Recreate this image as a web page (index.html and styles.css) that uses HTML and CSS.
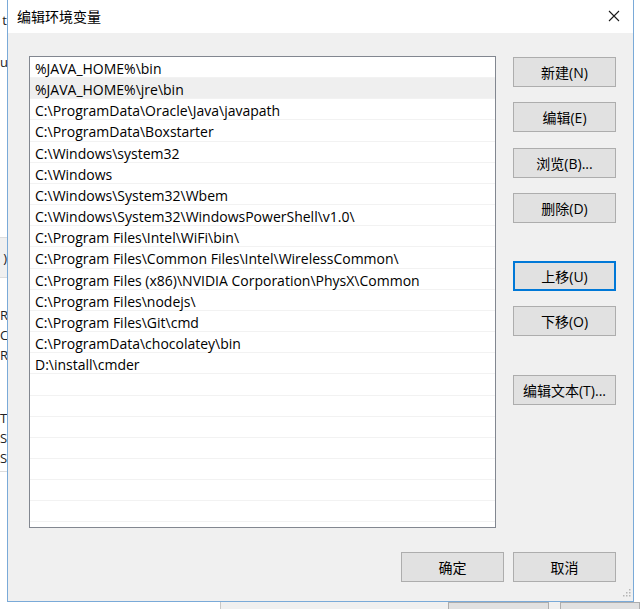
FILE: index.html
```html
<!DOCTYPE html>
<html lang="zh-CN">
<head>
    <meta charset="UTF-8">
    <title>编辑环境变量</title>
    <link rel="stylesheet" href="styles.css">
</head>
<body>
    <!-- Window behind the dialog: only its left and bottom edges show -->
    <div class="behind">
        <div class="behind-top">
            <div class="behind-side">
                <div class="frag frag-a">t</div>
                <div class="frag frag-b">u</div>
                <div class="frag frag-line"></div>
                <div class="frag frag-band">)</div>
                <div class="frag frag-gap-1"></div>
                <div class="frag frag-d">R</div>
                <div class="frag frag-d">C</div>
                <div class="frag frag-d">R</div>
                <div class="frag frag-gap-2"></div>
                <div class="frag frag-d">T</div>
                <div class="frag frag-d">S</div>
                <div class="frag frag-f">S</div>
            </div>
        </div>
        <div class="behind-bottom">
            <div class="bb-white"></div>
            <div class="bb-grey">
                <div class="bb-btn bb-btn-1"></div>
                <div class="bb-btn bb-btn-2"></div>
            </div>
        </div>
    </div>

    <!-- Edit environment variable dialog -->
    <div class="dialog">
        <div class="titlebar">
            <span class="title">编辑环境变量</span>
            <span class="close">
                <svg width="12" height="12" viewBox="0 0 12 12">
                    <path d="M1 1L11 11M11 1L1 11" stroke="#1a1a1a" stroke-width="1.1" fill="none"/>
                </svg>
            </span>
        </div>

        <div class="dialog-body">
            <div class="main-row">
                <!-- PATH entries -->
                <ul class="path-list">
                    <li>%JAVA_HOME%\bin</li>
                    <li class="hover">%JAVA_HOME%\jre\bin</li>
                    <li>C:\ProgramData\Oracle\Java\javapath</li>
                    <li>C:\ProgramData\Boxstarter</li>
                    <li>C:\Windows\system32</li>
                    <li>C:\Windows</li>
                    <li>C:\Windows\System32\Wbem</li>
                    <li>C:\Windows\System32\WindowsPowerShell\v1.0\</li>
                    <li>C:\Program Files\Intel\WiFi\bin\</li>
                    <li>C:\Program Files\Common Files\Intel\WirelessCommon\</li>
                    <li>C:\Program Files (x86)\NVIDIA Corporation\PhysX\Common</li>
                    <li>C:\Program Files\nodejs\</li>
                    <li>C:\Program Files\Git\cmd</li>
                    <li>C:\ProgramData\chocolatey\bin</li>
                    <li>D:\install\cmder</li>
                    <li></li>
                    <li></li>
                    <li></li>
                    <li></li>
                    <li></li>
                    <li></li>
                    <li></li>
                    <li></li>
                </ul>

                <!-- Action buttons -->
                <div class="actions">
                    <button class="btn">新建(N)</button>
                    <button class="btn">编辑(E)</button>
                    <button class="btn">浏览(B)...</button>
                    <button class="btn">删除(D)</button>
                    <button class="btn btn-focus group-start">上移(U)</button>
                    <button class="btn">下移(O)</button>
                    <button class="btn group-start">编辑文本(T)...</button>
                </div>
            </div>

            <div class="footer">
                <button class="btn">确定</button>
                <button class="btn">取消</button>
            </div>
        </div>

        <!-- Resize grip -->
        <svg class="grip" width="10" height="10" viewBox="0 0 10 10">
            <rect x="8" y="0" width="1.5" height="1.5" fill="#b5b5b5"/>
            <rect x="5" y="3" width="1.5" height="1.5" fill="#b5b5b5"/>
            <rect x="8" y="3" width="1.5" height="1.5" fill="#b5b5b5"/>
            <rect x="2" y="6" width="1.5" height="1.5" fill="#b5b5b5"/>
            <rect x="5" y="6" width="1.5" height="1.5" fill="#b5b5b5"/>
            <rect x="8" y="6" width="1.5" height="1.5" fill="#b5b5b5"/>
        </svg>
    </div>
</body>
</html>
```

FILE: styles.css
```css
/* Reset */
* {
    margin: 0;
    padding: 0;
    box-sizing: border-box;
}

body {
    width: 640px;
    height: 609px;
    overflow: hidden;
    position: relative;
    font-family: "Open Sans", "Noto Sans CJK SC", sans-serif;
    color: #000;
    background: #fff;
}

/* Window behind the dialog */
.behind {
    height: 100%;
    display: flex;
    flex-direction: column;
}

.behind-top {
    flex: 1;
}

.behind-side {
    width: 7px;
    overflow: hidden;
    font-size: 13px;
    color: #222;
}

.frag {
    text-align: right;
    white-space: nowrap;
    overflow: hidden;
}

.frag-a { height: 40px; line-height: 40px; }
.frag-b { height: 44px; line-height: 44px; }
.frag-line { height: 154px; border-bottom: 1px solid #dcdcdc; }
.frag-band { height: 40px; line-height: 40px; background: #f0f0f0; border-bottom: 1px solid #dcdcdc; }
.frag-gap-1 { height: 27px; }
.frag-gap-2 { height: 43px; }
.frag-d { height: 20px; line-height: 20px; }
.frag-f { height: 24px; line-height: 20px; border-bottom: 1px solid #dcdcdc; }

.behind-bottom {
    height: 7px;
    display: flex;
}

.bb-white {
    width: 220px;
    background: #fff;
}

.bb-grey {
    flex: 1;
    background: #f0f0f0;
    border-left: 1px solid #c8c8c8;
    display: flex;
    padding-left: 227px;
    gap: 11px;
}

.bb-btn {
    background: #e1e1e1;
    border: 1px solid #adadad;
    border-bottom: none;
}

.bb-btn-1 { width: 101px; }
.bb-btn-2 { flex: 1; }

/* Dialog frame */
.dialog {
    position: absolute;
    left: 7px;
    top: 0;
    width: 627px;
    height: 602px;
    border: 1px solid #7aaad8;
    border-top: none;
    background: #f0f0f0;
    display: flex;
    flex-direction: column;
}

.titlebar {
    height: 33px;
    background: #fff;
    display: flex;
    align-items: center;
    justify-content: space-between;
    padding-left: 9px;
    padding-bottom: 2px;
}

.title {
    font-size: 14px;
}

.close {
    width: 38px;
    height: 31px;
    display: flex;
    align-items: center;
    justify-content: center;
}

.dialog-body {
    flex: 1;
    padding: 23px 17px 19px 21px;
    display: flex;
    flex-direction: column;
}

.main-row {
    display: flex;
    gap: 17px;
}

/* PATH list */
.path-list {
    flex: 1;
    height: 472px;
    border: 1px solid #828790;
    background: #fff;
    overflow: hidden;
    list-style: none;
}

.path-list li {
    height: 21.17px;
    padding-top: 2px;
    line-height: 20px;
    padding-left: 5px;
    border-bottom: 1px solid #f2f2f2;
    font-size: 14px;
    white-space: nowrap;
}

.path-list li.hover {
    background: #efefef;
}

/* Buttons */
.actions {
    width: 103px;
    display: flex;
    flex-direction: column;
    gap: 15.3px;
    padding-top: 1px;
}

.group-start {
    margin-top: 23px;
}

.btn {
    width: 103px;
    height: 30px;
    background: #e1e1e1;
    border: 1px solid #adadad;
    font-family: "Open Sans", "Noto Sans CJK SC", sans-serif;
    font-size: 14px;
    color: #000;
}

.btn-focus {
    border: 2px solid #0078d7;
}

.footer {
    margin-top: 24px;
    display: flex;
    justify-content: flex-end;
    gap: 9px;
}

.grip {
    position: absolute;
    right: 2px;
    bottom: 2px;
}
```
